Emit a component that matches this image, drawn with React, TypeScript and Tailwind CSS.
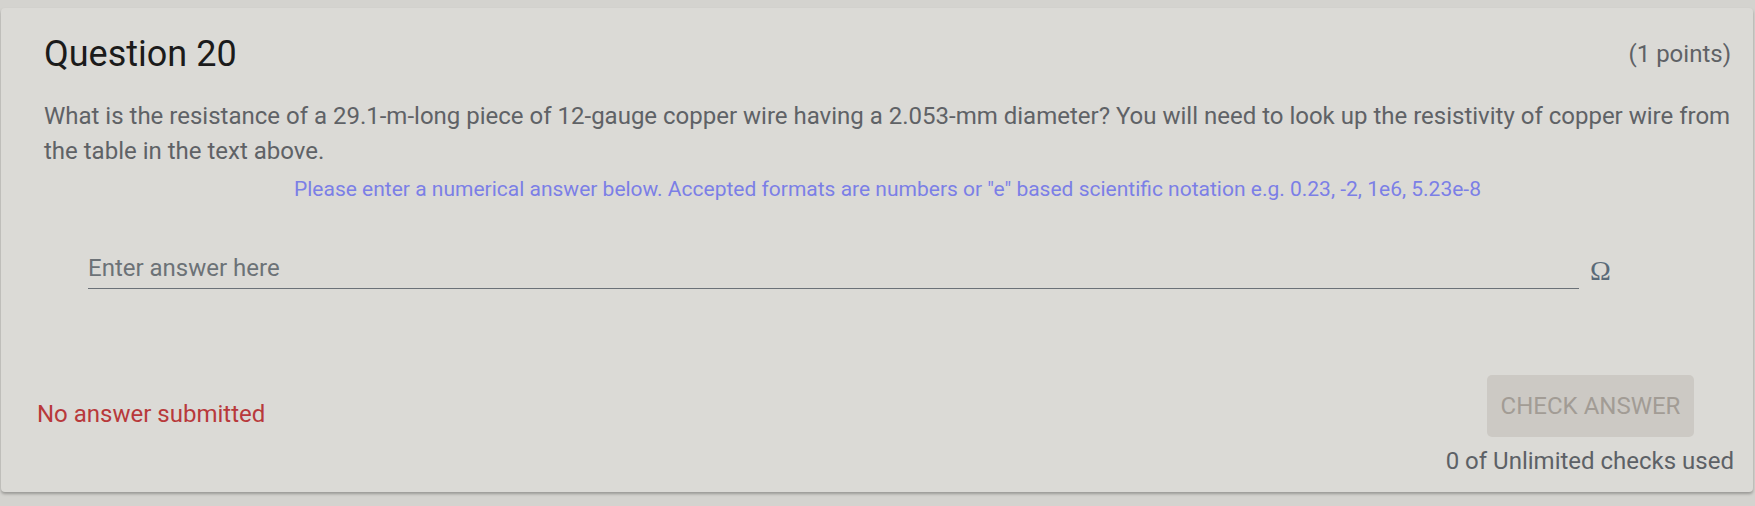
import React from "react";

export default function App() {
  return (
    <div
      className="w-[1755px] h-[506px] bg-[#d4d3cf] pt-[8px] pl-[1px] pr-[2px] overflow-hidden"
      style={{ fontFamily: "Roboto, 'Noto Sans', sans-serif" }}
    >
      <div className="h-[484px] w-[1752px] rounded-[4px] bg-[#dbdad6] shadow-[0_2px_3px_rgba(0,0,0,0.28)] flex flex-col">
        <div className="pl-[43px] pr-[22px] pt-[24px]">
          <div className="flex items-center justify-between">
            <h2 className="text-[36px] leading-[44px] text-[#1b1b1b]">Question 20</h2>
            <span className="text-[24px] leading-[33px] text-[#5f6266]">(1 points)</span>
          </div>
          <p className="mt-[23px] text-[24px] leading-[34.5px] text-[#5f6266]">
            What is the resistance of a 29.1-m-long piece of 12-gauge copper wire having a 2.053-mm diameter? You will
            need to look up the resistivity of copper wire from the table in the text above.
          </p>
          <p className="mt-[6px] text-center text-[21px] leading-[30px] text-[#7b7fe6]">
            Please enter a numerical answer below. Accepted formats are numbers or "e" based scientific notation e.g.
            0.23, -2, 1e6, 5.23e-8
          </p>
          <div className="mt-[50px] ml-[44px] flex items-start">
            <div className="w-[1491px] border-b border-[#6b7178] pb-[5px]">
              <input
                className="w-full bg-transparent outline-none text-[24px] leading-[29px] h-[29px] text-[#3a3d40] placeholder:text-[#6c7277]"
                placeholder="Enter answer here"
              />
            </div>
            <span
              className="ml-[11px] mt-[2px] text-[28px] leading-[29px] text-[#5a6a78]"
              style={{ fontFamily: "'Liberation Serif', 'DejaVu Serif', serif" }}
            >
              Ω
            </span>
          </div>
        </div>
        <div className="mt-auto pb-[13px] pl-[36px] pr-[19px] flex items-start justify-between">
          <span className="mt-[21px] text-[24px] leading-[36px] text-[#b8393b]">No answer submitted</span>
          <div className="flex flex-col items-end">
            <button className="mr-[40px] h-[62px] w-[207px] rounded-[5px] bg-[#ccc9c4] text-[24px] leading-[36px] text-[#a29c95] uppercase">
              Check Answer
            </button>
            <span className="mt-[6px] text-[24px] leading-[36px] text-[#5d6166]">0 of Unlimited checks used</span>
          </div>
        </div>
      </div>
    </div>
  );
}
